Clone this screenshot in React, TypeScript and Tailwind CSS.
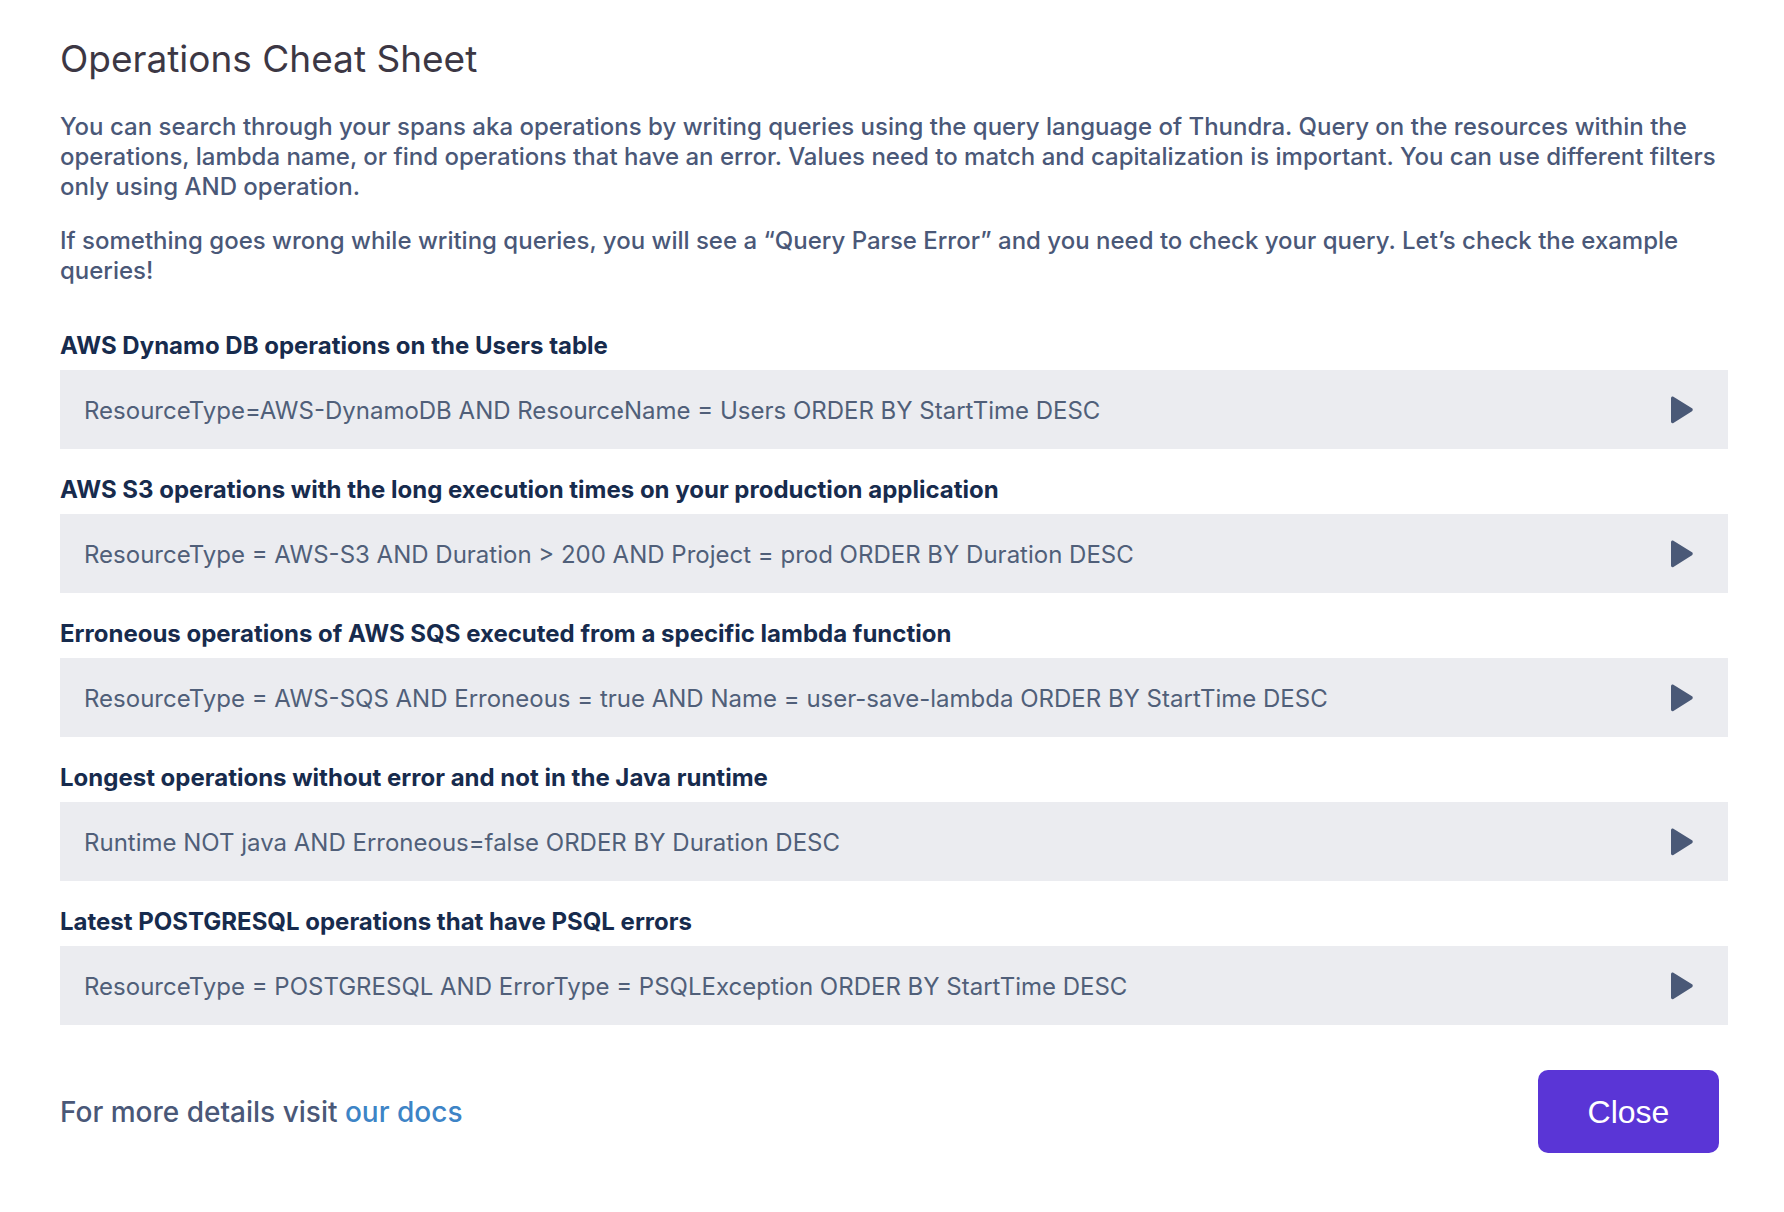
import React from "react";

interface Example {
  title: string;
  query: string;
}

const EXAMPLES: Example[] = [
  {
    title: "AWS Dynamo DB operations on the Users table",
    query: "ResourceType=AWS-DynamoDB AND ResourceName = Users ORDER BY StartTime DESC",
  },
  {
    title: "AWS S3 operations with the long execution times on your production application",
    query: "ResourceType = AWS-S3 AND Duration > 200 AND Project = prod ORDER BY Duration DESC",
  },
  {
    title: "Erroneous operations of AWS SQS executed from a specific lambda function",
    query: "ResourceType = AWS-SQS AND Erroneous = true AND Name = user-save-lambda ORDER BY StartTime DESC",
  },
  {
    title: "Longest operations without error and not in the Java runtime",
    query: "Runtime NOT java AND Erroneous=false ORDER BY Duration DESC",
  },
  {
    title: "Latest POSTGRESQL operations that have PSQL errors",
    query: "ResourceType = POSTGRESQL AND ErrorType = PSQLException ORDER BY StartTime DESC",
  },
];

function PlayIcon() {
  // rounded triangle, pointing right
  return (
    <svg width="26" height="28" viewBox="0 0 26 28" aria-hidden="true">
      <path
        d="M3 2.2 C3 0.9 4.3 0.2 5.4 0.8 L24 12.3 C25 12.9 25 14.6 24 15.2 L5.4 26.9 C4.3 27.6 3 26.8 3 25.5 Z"
        fill="#4a5977"
      />
    </svg>
  );
}

function QueryExample({ title, query, first }: Example & { first: boolean }) {
  return (
    <section className={first ? "mt-[46px]" : "mt-[27px]"}>
      <h3 className="text-[24px] leading-[28px] font-bold text-[#172b4d] mb-[10px]">{title}</h3>
      <div className="h-[79px] bg-[#ebecf0] flex items-center justify-between pl-[24px] pr-[34px]">
        <span className="pt-[3px] text-[24px] leading-[28px] text-[#505f79]">{query}</span>
        <button className="flex items-center justify-center" aria-label="Run query">
          <PlayIcon />
        </button>
      </div>
    </section>
  );
}

export default function App() {
  return (
    <div
      className="min-h-screen bg-white pl-[60px] pr-[56px] pt-[39px]"
      style={{ fontFamily: "Inter, 'Noto Sans', sans-serif" }}
    >
      <h1 className="text-[37px] leading-[40px] font-normal text-[#3c3744]">Operations Cheat Sheet</h1>

      <div className="mt-[33px] text-[24px] leading-[30px] font-medium text-[#4a5878]">
        <p className="mb-6">
          You can search through your spans aka operations by writing queries using the query language of Thundra.
          Query on the resources within the operations, lambda name, or find operations that have an error. Values
          need to match and capitalization is important. You can use different filters only using AND operation.
        </p>
        <p>
          If something goes wrong while writing queries, you will see a “Query Parse Error” and you need to check your
          query. Let’s check the example queries!
        </p>
      </div>

      {EXAMPLES.map((ex, i) => (
        <QueryExample key={ex.title} {...ex} first={i === 0} />
      ))}

      <div className="mt-[45px] flex items-center justify-between pr-[9px]">
        <p className="text-[28px] leading-[32px] font-medium text-[#4a5878]">
          For more details visit{" "}
          <a href="#" className="text-[#3d84c6]">
            our docs
          </a>
        </p>
        <button
          className="w-[181px] h-[83px] rounded-[10px] bg-[#5a35d6] text-white text-[32px]"
          style={{ fontFamily: "'Liberation Sans', Arial, sans-serif" }}
        >
          Close
        </button>
      </div>
    </div>
  );
}
